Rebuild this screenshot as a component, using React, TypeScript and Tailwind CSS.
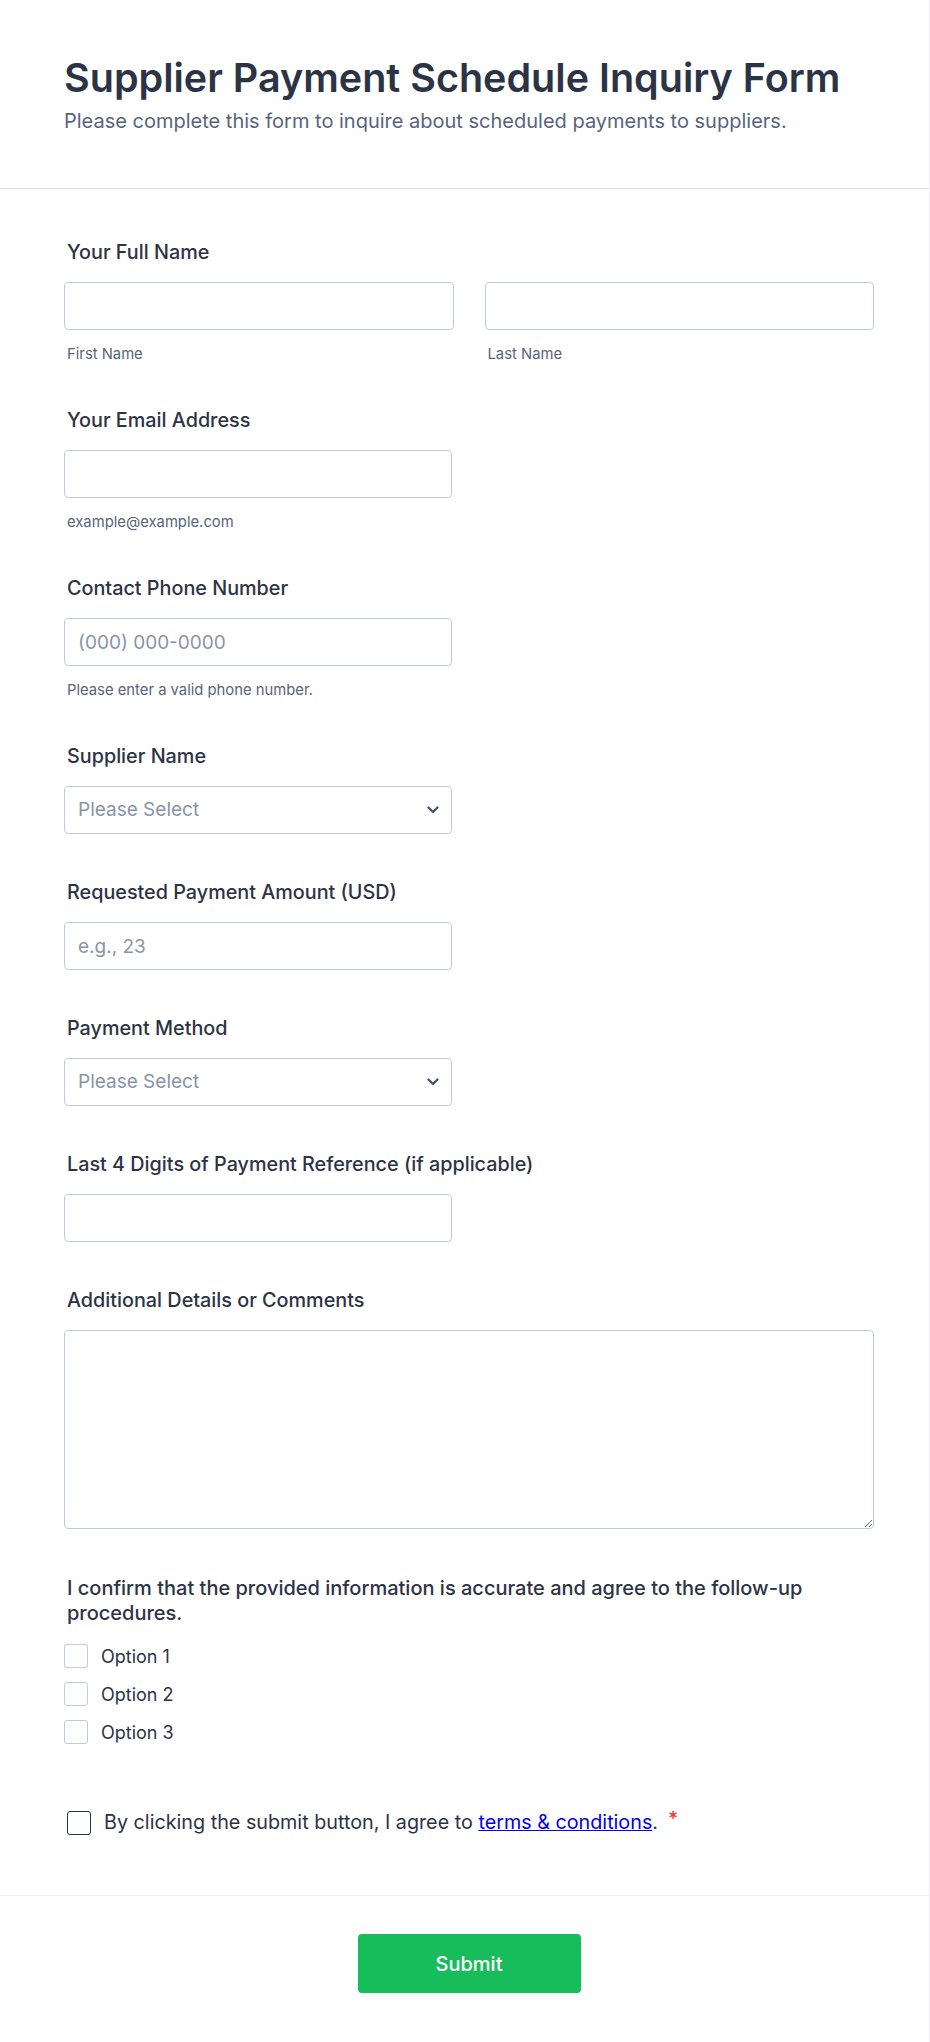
import React from "react";

const font = { fontFamily: "Inter, 'Noto Sans', sans-serif" };

function Label({ children }: { children: React.ReactNode }) {
  return (
    <div className="pl-[3px] text-[19.8px] leading-6 font-medium text-[#2c3345]">{children}</div>
  );
}

function Sub({ children }: { children: React.ReactNode }) {
  return <div className="mt-[15px] pl-[3px] text-[14.8px] leading-[18px] text-[#57647e]">{children}</div>;
}

function TextInput({ placeholder, wide }: { placeholder?: string; wide?: boolean }) {
  return (
    <input
      type="text"
      placeholder={placeholder}
      className={`mt-[18px] block h-12 ${wide ? "w-full" : "w-[388px]"} rounded-[4px] border border-[#c3cad8] bg-white px-[13px] text-[19px] text-[#2c3345] placeholder:text-[#8894ab] outline-none`}
    />
  );
}

function Select() {
  return (
    <div className="mt-[18px] flex h-12 w-[388px] items-center justify-between rounded-[4px] border border-[#c3cad8] bg-white pl-[13px] pr-[11px]">
      <span className="text-[19px] text-[#8894ab]">Please Select</span>
      <svg width="14" height="14" viewBox="0 0 14 14" fill="none">
        <polyline points="2.5,4.5 7,9 11.5,4.5" stroke="#4a5570" strokeWidth="2.4" strokeLinecap="round" strokeLinejoin="round" />
      </svg>
    </div>
  );
}

function Check({ label }: { label: string }) {
  return (
    <label className="flex h-6 items-center gap-[13px]">
      <input
        type="checkbox"
        className="h-6 w-6 appearance-none rounded-[3px] border border-[#c3cad8] bg-white"
      />
      <span className="text-[18px] text-[#2c3345]">{label}</span>
    </label>
  );
}

export default function App() {
  return (
    <div style={font} className="w-[930px] min-h-[2042px] bg-white border-r border-[#f0f0f4]">
      <div className="h-[188px] pl-16 pt-[56px]">
        <h1 className="text-[39.5px] leading-[44px] font-semibold text-[#2c3345]">
          Supplier Payment Schedule Inquiry Form
        </h1>
        <p className="mt-[8px] text-[20px] leading-[26px] text-[#57647e]">
          Please complete this form to inquire about scheduled payments to suppliers.
        </p>
      </div>
      <div className="border-t border-[#dcdfe9]" />

      <div className="pl-16 pr-[55px] pt-[51px]">
        <Label>Your Full Name</Label>
        <div className="flex gap-[31px]">
          <div className="flex-1">
            <TextInput wide />
            <Sub>First Name</Sub>
          </div>
          <div className="flex-1">
            <TextInput wide />
            <Sub>Last Name</Sub>
          </div>
        </div>

        <div className="mt-[45px]">
          <Label>Your Email Address</Label>
          <TextInput />
          <Sub>example@example.com</Sub>
        </div>

        <div className="mt-[45px]">
          <Label>Contact Phone Number</Label>
          <TextInput placeholder="(000) 000-0000" />
          <Sub>Please enter a valid phone number.</Sub>
        </div>

        <div className="mt-[45px]">
          <Label>Supplier Name</Label>
          <Select />
        </div>

        <div className="mt-[46px]">
          <Label>Requested Payment Amount (USD)</Label>
          <TextInput placeholder="e.g., 23" />
        </div>

        <div className="mt-[46px]">
          <Label>Payment Method</Label>
          <Select />
        </div>

        <div className="mt-[46px]">
          <Label>Last 4 Digits of Payment Reference (if applicable)</Label>
          <TextInput />
        </div>

        <div className="mt-[46px]">
          <Label>Additional Details or Comments</Label>
          <textarea className="mt-[18px] block h-[199px] w-full resize-y rounded-[4px] border border-[#c3cad8] bg-white px-[13px] py-2 text-[19px] outline-none" />
        </div>

        <div className="mt-[47px]">
          <div className="pl-[3px] text-[20px] leading-[25px] font-medium text-[#2c3345]">
            I confirm that the provided information is accurate and agree to the follow-up procedures.
          </div>
          <div className="mt-[18px] flex flex-col gap-[14px]">
            <Check label="Option 1" />
            <Check label="Option 2" />
            <Check label="Option 3" />
          </div>
        </div>

        <div className="mt-[67px] flex h-6 items-center pl-[3px]">
          <input
            type="checkbox"
            className="h-6 w-6 appearance-none rounded-[3px] border-[1.5px] border-[#2c3345] bg-white"
          />
          <span className="ml-[13px] text-[19.75px] text-[#2c3345]">
            By clicking the submit button, I agree to{" "}
            <a href="#" className="text-[#0000ee] underline">
              terms &amp; conditions
            </a>
            .
          </span>
          <span className="relative -top-[4px] ml-[10px] text-[19px] font-semibold text-[#f23a3c]">*</span>
        </div>
      </div>

      <div className="mt-[60px] border-t border-[#ececf3]" />
      <div className="flex justify-center pl-16 pr-[55px] pt-[38px] pb-[50px]">
        <button className="h-[59px] w-[223px] rounded-[4px] bg-[#18bd5b] text-[20px] font-medium text-white">
          Submit
        </button>
      </div>
    </div>
  );
}
